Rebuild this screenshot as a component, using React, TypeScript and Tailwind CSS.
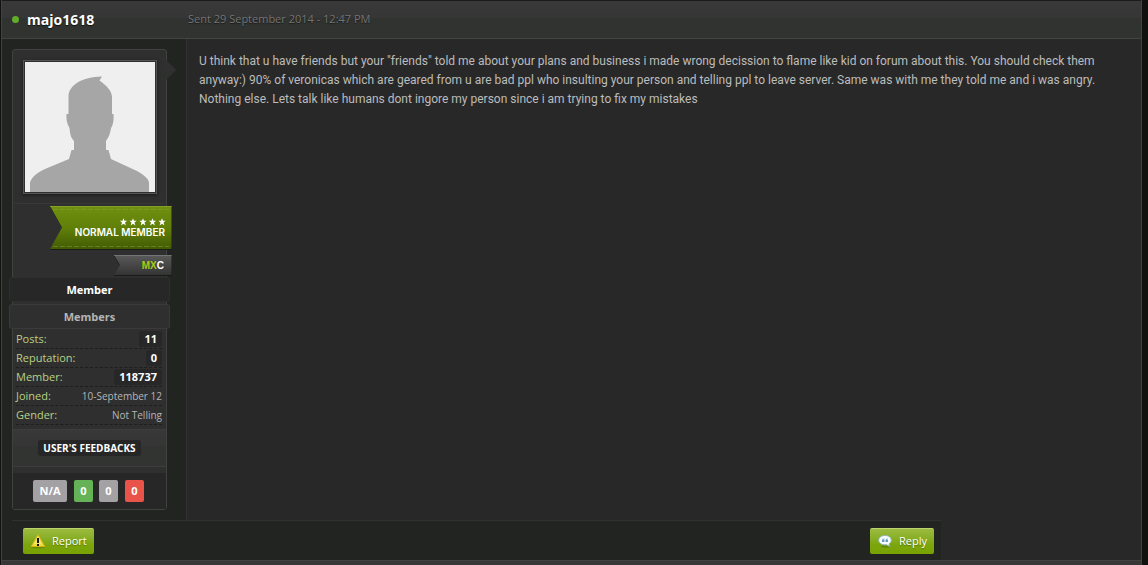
import React from "react";

const font = "font-['Open_Sans','Noto_Sans',sans-serif]";

function Avatar() {
  return (
    <svg viewBox="0 0 130 130" className="block h-[130px] w-[130px]" role="img" aria-label="majo1618">
      <rect width="130" height="130" fill="#efefef" />
      <path
        fill="#a6a6a6"
        d="M43.500 52V34C44 23 57 15 77 14.500L74.500 18.500C81 23 87 29 87 35V52H88.500C89 60 87.500 64 86 66C85 73 83 76 81 79V88H83.500L86 97L112 109C119 113 124 117 124 121V130H5V121C6 116 10 112 20 107L44 97L46.500 88H49V79C46 76 45 72 44.500 66C42 62 41 57 41.500 52Z"
      />
    </svg>
  );
}

function RankBadge() {
  return (
    <svg viewBox="0 0 122 44" className="block h-11 w-[122px]" role="img" aria-label="Normal member">
      <defs>
        <linearGradient id="rank" x1="0" y1="0" x2="0" y2="1">
          <stop offset="0" stopColor="#6f9010" />
          <stop offset=".5" stopColor="#618008" />
          <stop offset="1" stopColor="#425b04" />
        </linearGradient>
      </defs>
      <path d="M0 1H122V44H0L12 22Z" fill="#1b1d18" />
      <path d="M0 0H121.500V43H0L12 21.500Z" fill="url(#rank)" />
      <path d="M0 .5H121.500" fill="none" stroke="#86a02a" />
      <path d="M3 3.500H119M3 40.500H119" stroke="#93a33f" strokeDasharray="5 2" opacity=".45" />
      {[73.5, 83, 93, 102.5, 112].map((x) => (
        <path
          key={x}
          transform={`translate(${x} 16)`}
          fill="#fff"
          d="M0-3.800L1-1.200H3.700L1.500.500L2.400 3.400L0 1.700L-2.400 3.400L-1.500.500L-3.700-1.200H-1Z"
        />
      ))}
      <text x="115" y="30" textAnchor="end" fill="#fff" className="font-['Inter','Liberation_Sans',sans-serif] text-[10px] font-semibold">
        NORMAL MEMBER
      </text>
    </svg>
  );
}

function MxcBadge() {
  return (
    <svg viewBox="0 0 58 21" className="block h-[21px] w-[58px]" role="img" aria-label="MXC">
      <defs>
        <linearGradient id="mxc" x1="0" y1="0" x2="0" y2="1">
          <stop offset="0" stopColor="#5a5a5a" />
          <stop offset="1" stopColor="#343434" />
        </linearGradient>
      </defs>
      <path d="M0 1H58V21H0L6 11Z" fill="#191919" />
      <path d="M0 0H57.500V20H0L6 10Z" fill="url(#mxc)" />
      <path d="M0 .5H57.500" fill="none" stroke="#747474" />
      <text x="50" y="14" textAnchor="end" fill="#fff" className="font-['Liberation_Sans',sans-serif] text-[10px] font-bold">
        <tspan fill="#a5cb16">MX</tspan>C
      </text>
    </svg>
  );
}

function WarningIcon() {
  return (
    <svg viewBox="0 0 16 16" className="h-4 w-4" aria-hidden="true">
      <ellipse cx="8" cy="14" rx="7.500" ry="1.500" fill="#507000" opacity=".5" />
      <path d="M8 1.500L14.800 13.500H1.200Z" fill="#eeda3d" stroke="#d3b516" strokeLinejoin="round" />
      <path d="M8 3L12 11H4Z" fill="#f8f094" opacity=".5" />
      <path d="M7 5H9V10H7ZM7 11H9V13H7Z" fill="#171717" />
    </svg>
  );
}

function QuoteIcon() {
  return (
    <svg viewBox="0 0 16 16" className="h-4 w-4" aria-hidden="true">
      <ellipse cx="9" cy="13.500" rx="5" ry="1.200" fill="#507000" opacity=".5" />
      <path d="M8 2.500C11.500 2.500 14.300 4.300 14.300 7.200C14.300 9 13.300 10.200 12 11L13 13.500L9.500 11.800C5 12.200 1.700 10.300 1.700 7.200C1.700 4.300 4.500 2.500 8 2.500Z" fill="#f5fbff" stroke="#8db5ad" />
      <path d="M7.500 5.500C5.500 5.500 5 6.500 5 7.800V9H7.500V7H6.300C6.500 6.500 7 6.300 7.500 6.300ZM11 5.500C9 5.500 8.500 6.500 8.500 7.800V9H11V7H9.800C10 6.500 10.500 6.300 11 6.300Z" fill="#6c9cc0" />
    </svg>
  );
}

const stats = [
  { label: "Posts:", value: "11", strong: true },
  { label: "Reputation:", value: "0", strong: true },
  { label: "Member:", value: "118737", strong: true },
  { label: "Joined:", value: "10-September 12", strong: false },
  { label: "Gender:", value: "Not Telling", strong: false },
];

const buttonStyle =
  "flex h-[26px] items-center gap-1.5 rounded-xs border-t border-[#bdd36e] bg-linear-to-b from-[#9bbc3f] from-0% via-[#7da60e] via-60% to-[#77a200] px-[7px] text-[11px] text-white [text-shadow:0_1px_1px_#56740a]";

function UserPanel() {
  return (
    <aside className="relative mt-2.5 ml-2.5 flex h-[461px] w-[155px] flex-col rounded-[3px] border border-[#3f423f] bg-[#2f2f2f]">
      <div className="flex h-[154px] flex-none justify-center rounded-b border-b border-[#383838] pt-2.5">
        <div className="h-[134px] border border-[#555] p-px shadow-[0_1px_3px_#181818]">
          <Avatar />
        </div>
      </div>
      <svg viewBox="0 0 10 20" className="absolute top-2.5 -right-2.5 h-5 w-2.5" aria-hidden="true">
        <path d="M0 0L10 10L0 20Z" fill="#303030" />
      </svg>
      <div className="-mr-[6px] flex flex-col items-end gap-[5px] pt-0.5">
        <RankBadge />
        <MxcBadge />
      </div>
      <div className="-mx-1 mt-px flex flex-col gap-0.5 text-center text-[11px] leading-6 font-bold">
        <div className="h-[25px] rounded-[3px] border border-[#2e2e2e] bg-[#272727] text-white">Member</div>
        <div className="h-[25px] rounded-[3px] border border-[#3a3a3a] bg-[#2f2f2f] text-[#b5b5b5]">Members</div>
      </div>
      <dl className="flex flex-col pr-1 pl-[3px] pt-px">
        {stats.map((s) => (
          <div key={s.label} className="flex h-[19px] items-center justify-between border-b border-dashed border-[#1e1e1e]">
            <dt className="text-[11px] text-[#b9d184]">{s.label}</dt>
            {s.strong ? (
              <dd className="rounded-[3px] bg-[#272727] px-[5px] text-[11px] leading-4 font-bold text-white">{s.value}</dd>
            ) : (
              <dd className="text-[10px] text-[#b5b5b5]">{s.value}</dd>
            )}
          </div>
        ))}
      </dl>
      <div className="mt-1 flex h-[38px] flex-none items-center justify-center border-y border-[#3d3d3d] bg-linear-to-b from-[#383838] from-0% via-[#353535] via-45% to-[#323431] to-45%">
        <h3 className="rounded-[3px] bg-[#262626] px-[5px] text-[10px] leading-4 font-bold text-white">USER'S FEEDBACKS</h3>
      </div>
      <div className="mt-1.5 flex flex-1 items-center justify-center bg-[#272727] pr-0.5 text-[11px] leading-[22px] font-bold text-white">
        <span className="mr-[7px] w-[34px] rounded-xs bg-[#a3a1a4] text-center">N/A</span>
        <span className="mr-1.5 w-[19px] rounded-xs bg-[#66b357] text-center">0</span>
        <span className="mr-[7px] w-[19px] rounded-xs bg-[#a3a1a4] text-center">0</span>
        <span className="w-[19px] rounded-xs bg-[#e9534a] text-center">0</span>
      </div>
    </aside>
  );
}

export default function App() {
  return (
    <div className={`min-h-screen bg-[#111210] pr-1.5 pl-px ${font}`}>
      <article className="border-x border-[#424242] bg-[#282828]">
        <header className="flex h-[39px] items-center border-t border-b border-t-[#1b1b1b] border-b-[#424442] bg-linear-to-b from-[#393939] from-0% via-[#363636] via-45% to-[#313330] to-45%">
          <span className="ml-2.5 h-[7px] w-[7px] rounded-full bg-[#62ac2c]" />
          <h2 className="ml-2 w-[161px] text-[14px] font-bold text-white [text-shadow:0_1px_1px_#111]">majo1618</h2>
          <time className="text-[11px] text-[#747474] [text-shadow:0_1px_1px_#1a1a1a]">Sent 29 September 2014 - 12:47 PM</time>
        </header>
        <div className="flex min-h-[481px]">
          <div className="w-[185px] flex-none border-r border-[#303130] bg-[#222422]">
            <UserPanel />
          </div>
          <p className="px-3 pt-[13px] font-['Roboto',sans-serif] text-[12px] leading-[19px] text-[#bcbcbc]">
            U think that u have friends but your "friends" told me about your plans and business i made wrong decission to flame like kid on forum about this. You should check them anyway:) 90% of veronicas which are geared from u are bad ppl who insulting your person and telling ppl to leave server. Same was with me they told me and i was angry. Nothing else. Lets talk like humans dont ingore my person since i am trying to fix my mistakes
          </p>
        </div>
        <footer className="w-[939px] max-w-full bg-[#222422] pl-2.5">
          <div className="flex h-10 items-center justify-between border-t border-[#303130] pr-[7px] pl-[11px]">
            <button type="button" className={buttonStyle}>
              <WarningIcon />
              Report
            </button>
            <button type="button" className={buttonStyle}>
              <QuoteIcon />
              Reply
            </button>
          </div>
        </footer>
        <div className="h-[5px] border-t border-[#424242] bg-[#373737]" />
      </article>
    </div>
  );
}
